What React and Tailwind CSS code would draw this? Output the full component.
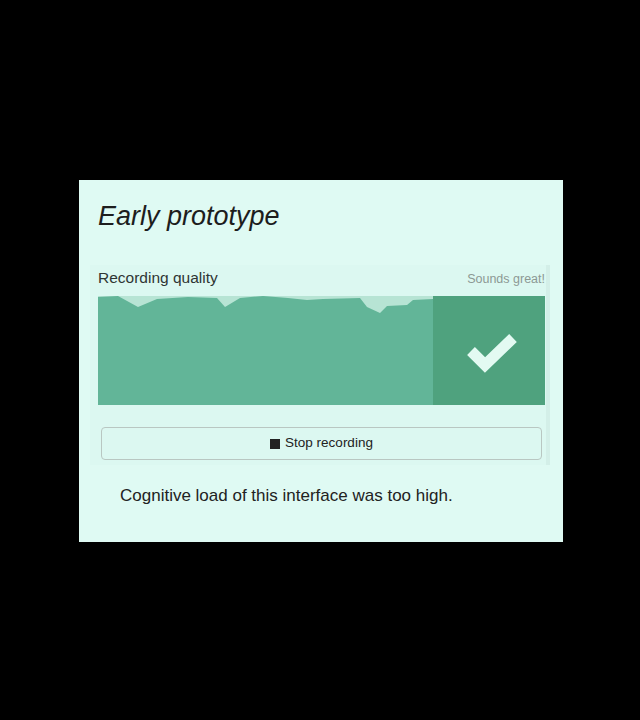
import React from 'react';

// top edge of the level meter, local coords inside a 335x109 box
const wavePoints = '0,1 20,0 40,11 59,3 90,1 119,2 127,11 142,2 165,0 190,2 209,4 225,3 262,2 269,11 282,17 289,10 309,9 315,4 335,3';

function LevelMeter() {
  return (
    <div className="flex h-[109px] w-full">
      <div className="relative h-full w-[335px] bg-[#b7e4d4]">
        <svg width="335" height="109" viewBox="0 0 335 109" className="block">
          <polygon points={`${wavePoints} 335,109 0,109`} fill="#62b598" />
        </svg>
      </div>
      <div className="flex h-full flex-1 items-center justify-center bg-[#4fa27e]">
        <svg width="112" height="109" viewBox="0 0 112 109" className="block">
          <polyline points="38,55 52,69 80,42" fill="none" stroke="#e3faf2" strokeWidth="11" strokeLinejoin="miter" />
        </svg>
      </div>
    </div>
  );
}

export default function App() {
  return (
    <div className="flex h-screen w-full items-center justify-center bg-black pl-[2px] pt-[2px]" style={{ fontFamily: '"Liberation Sans", Arial, sans-serif' }}>
      <div className="flex h-[362px] w-[484px] flex-col bg-[#dffaf3]">
        <h1 className="ml-[19px] mt-[21px] text-[27px] leading-[30px] italic text-[#1d1d1d]">Early prototype</h1>

        <div className="ml-[11px] mt-[34px] w-[460px] border-r-4 border-[#d3efe8] bg-[#dcf8f1] pb-[5px] pl-[8px] pr-[1px] pt-[4px]">
          <div className="flex items-end justify-between pb-[9px]">
            <span className="text-[15.5px] leading-[18px] text-[#2f3533]">Recording quality</span>
            <span className="text-[12.5px] leading-[16px] text-[#8c9994]">Sounds great!</span>
          </div>
          <LevelMeter />
          <button className="mx-[3px] mt-[22px] flex h-[33px] w-[441px] items-center justify-center gap-[5px] rounded-[4px] border border-[#b9c7c2] text-[13.5px] text-[#222]">
            <span className="inline-block h-[10px] w-[10px] bg-[#222]" />
            Stop recording
          </button>
        </div>

        <p className="ml-[41px] mt-[21px] text-[17px] leading-[20px] text-[#222]">Cognitive load of this interface was too high.</p>
      </div>
    </div>
  );
}
